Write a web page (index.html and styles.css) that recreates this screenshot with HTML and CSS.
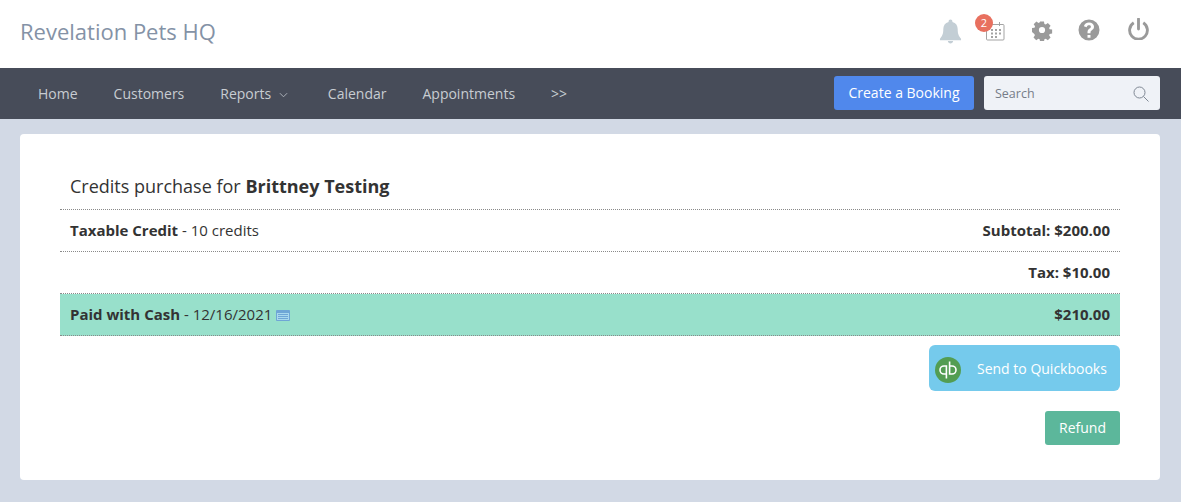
FILE: index.html
```html
<!DOCTYPE html>
<html lang="en">
<head>
<meta charset="utf-8">
<title>Revelation Pets HQ</title>
<link rel="stylesheet" href="styles.css">
</head>
<body>
<header class="topbar">
  <div class="brand">Revelation Pets HQ</div>
  <div class="top-icons">
    <svg class="ic ic-bell" viewBox="0 0 24 26" width="23" height="25"><path fill="#c3ced5" d="M12 0.500c-1.200 0-2 .9-2 2v.6C6.300 4 4.500 7 4.500 10.500c0 5.500-1.300 7.500-3.500 10v1.500h22v-1.500c-2.200-2.500-3.500-4.500-3.500-10 0-3.500-1.800-6.500-5.500-7.400v-.6c0-1.100-.8-2-2-2zM9.200 23c.2 1.500 1.400 2.500 2.800 2.500s2.600-1 2.800-2.500z"/></svg>
    <div class="cal-wrap">
      <svg class="ic-cal" viewBox="0 0 20 20" width="20" height="20"><g fill="none" stroke="#a3a3a3" stroke-width="1"><rect x="1.500" y="3.500" width="17.500" height="15.500" rx="1"/><path d="M6 1v4M14.500 1v4"/></g><g fill="#a3a3a3"><rect x="6" y="8" width="2" height="2"/><rect x="10" y="8" width="2" height="2"/><rect x="14" y="8" width="2" height="2"/><rect x="6" y="11.500" width="2" height="2"/><rect x="10" y="11.500" width="2" height="2"/><rect x="14" y="11.500" width="2" height="2"/><rect x="6" y="15" width="2" height="2"/><rect x="10" y="15" width="2" height="2"/></g></svg>
      <span class="badge">2</span>
    </div>
    <svg class="ic ic-gear" viewBox="0 0 24 24" width="22" height="22"><path fill="#9a9a9a" fill-rule="evenodd" d="M9.500 1h5l.6 3.200 1.700.7 2.700-1.800 3.500 3.500-1.900 2.700.7 1.700 3.200.5v5l-3.200.6-.7 1.700 1.900 2.700-3.500 3.500-2.700-1.900-1.700.7-.6 3.200h-5l-.5-3.200-1.700-.7-2.700 1.900-3.500-3.500 1.800-2.700-.7-1.700L-.8 14.500v-5l3.200-.5.700-1.700-1.800-2.700 3.500-3.500 2.700 1.800 1.700-.7zM12 8a4 4 0 1 0 0 8 4 4 0 0 0 0-8z" transform="translate(1.800 1.800) scale(.85)"/></svg>
    <svg class="ic ic-help" viewBox="0 0 22 22" width="22" height="22"><path fill="#9a9a9a" fill-rule="evenodd" d="M11 .5a10.500 10.500 0 1 0 0 21 10.500 10.500 0 0 0 0-21zM9.500 16h3v2.800h-3zM11 3.500c2.900 0 5 1.700 5 4.200 0 1.800-1 2.700-2.100 3.500-.9.700-1.400 1.100-1.400 2.300v.7h-3v-1c0-1.800.8-2.800 2-3.700.9-.6 1.400-1 1.400-1.800 0-.9-.8-1.400-1.900-1.400-1.200 0-2 .6-2.300 2l-2.800-1c.5-2.500 2.500-3.800 5.100-3.800z"/></svg>
    <svg class="ic ic-power" viewBox="0 0 22 23" width="21" height="22"><g fill="none" stroke="#9a9a9a" stroke-width="3"><path d="M11 1v10.500" stroke-linecap="round"/><path d="M6 5A9.300 9.300 0 1 0 16 5"/></g></svg>
  </div>
</header>
<nav class="navbar">
  <ul class="menu">
    <li>Home</li>
    <li>Customers</li>
    <li class="has-caret">Reports <svg class="caret" viewBox="0 0 10 6" width="9" height="6"><path d="M1 1l4 4 4-4" fill="none" stroke="#b5bac2" stroke-width="1"/></svg></li>
    <li>Calendar</li>
    <li>Appointments</li>
    <li>&gt;&gt;</li>
  </ul>
  <button class="btn-book">Create a Booking</button>
  <div class="search">
    <span class="search-label">Search</span>
    <svg viewBox="0 0 16 16" width="16" height="16"><circle cx="6.500" cy="6.500" r="5.500" fill="none" stroke="#7f8894" stroke-width="1"/><path d="M10.500 10.500L15.500 15.500" stroke="#7f8894" stroke-width="1"/></svg>
  </div>
</nav>
<main class="page">
  <section class="card">
    <h1 class="title">Credits purchase for <b>Brittney Testing</b></h1>
    <div class="row"><span><b>Taxable Credit</b> - 10 credits</span><b>Subtotal: $200.00</b></div>
    <div class="row"><span></span><b>Tax: $10.00</b></div>
    <div class="row row-paid"><span class="paid-left"><b>Paid with Cash</b> - 12/16/2021
      <svg class="note" viewBox="0 0 14 11" width="14" height="11"><rect x="0" y="0" width="14" height="11" rx="1" fill="#6fa6d6"/><rect x="1" y="3" width="12" height="7" fill="#a9d8ee"/><path d="M2 4.500h10M2 6.500h10M2 8.500h10" stroke="#6fa6d6" stroke-width="1"/></svg></span><b>$210.00</b></div>
    <div class="actions">
      <button class="btn-qb">
        <svg class="qb-logo" viewBox="0 0 26 26" width="26" height="26"><circle cx="13" cy="13" r="13" fill="#539d52"/><g fill="none" stroke="#fff" stroke-width="1.600"><path d="M11.400 17H9a4 4 0 0 1 0-8h2.400v12.500"/><path d="M14.600 9H17a4 4 0 0 1 0 8h-2.400V4.500"/></g></svg>
        <span>Send to Quickbooks</span>
      </button>
      <button class="btn-refund">Refund</button>
    </div>
  </section>
</main>
</body>
</html>
```
FILE: styles.css
```css
* { box-sizing: border-box; }
html, body { margin: 0; padding: 0; }
body {
  height: 502px;
  overflow: hidden;
  background: #d2d9e5;
  font-family: "Open Sans", "Noto Sans", sans-serif;
  font-size: 14px;
  color: #333;
}
.topbar {
  height: 68px;
  background: #fff;
  display: flex;
  align-items: center;
  justify-content: space-between;
  padding: 0 32px 9px 20px;
}
.brand { font-size: 22px; color: #8492a6; margin-top: 3px; }
.top-icons { display: flex; align-items: center; }
.ic-bell { margin-right: 23px; margin-top: 3px; }
.cal-wrap { position: relative; width: 20px; height: 20px; margin-right: 26px; margin-top: 2px; }
.ic-cal { display: block; }
.badge {
  position: absolute;
  left: -10px;
  top: -7px;
  width: 18px;
  height: 18px;
  border-radius: 50%;
  background: #e8705f;
  color: #fff;
  font-size: 11px;
  line-height: 18px;
  text-align: center;
}
.ic-gear { margin-right: 25px; }
.ic-help { margin-right: 28px; }
.ic-power { margin-bottom: 1px; }
.navbar {
  height: 51px;
  background: #474c59;
  display: flex;
  align-items: center;
  padding: 0 21px 1px 20px;
}
.menu {
  list-style: none;
  margin: 0;
  padding: 1px 0 0;
  display: flex;
  flex: 1;
  color: #c8ccd2;
  font-size: 14px;
}
.menu li { padding: 0 18px; white-space: nowrap; }
.menu .has-caret { padding-right: 22px; }
.caret { margin-left: 4px; vertical-align: 1px; }
button {
  border: 0;
  font-family: inherit;
  color: #fff;
  font-size: 14px;
  padding: 0;
}
.btn-book {
  width: 140px;
  height: 34px;
  border-radius: 3px;
  background: #5088ec;
  margin-right: 10px;
  padding-bottom: 2px;
}
.search {
  width: 176px;
  height: 34px;
  border-radius: 3px;
  background: #eff2f7;
  display: flex;
  align-items: center;
  justify-content: space-between;
  padding: 0 11px;
  font-size: 12.5px;
  color: #767d88;
}
.search svg { margin-top: 2px; }
.page { padding: 15px 21px 0 20px; }
.card {
  height: 346px;
  background: #fff;
  border-radius: 4px;
  padding: 32px 40px 0;
}
.title {
  margin: 0;
  height: 44px;
  padding: 9px 10px 0;
  font-size: 18px;
  line-height: 22px;
  font-weight: 400;
  border-bottom: 1px dotted #8a8a8a;
}
.title b { font-weight: 700; }
.row {
  height: 42px;
  padding: 0 10px 2px;
  display: flex;
  align-items: center;
  justify-content: space-between;
  border-bottom: 1px dotted #8a8a8a;
  font-size: 15px;
}
.row-paid { background: #98e0cb; }
.note { vertical-align: -1px; }
.actions {
  display: flex;
  flex-direction: column;
  align-items: flex-end;
}
.btn-qb {
  width: 191px;
  height: 46px;
  margin-top: 9px;
  border-radius: 6px;
  background: #75caec;
  display: flex;
  align-items: center;
  padding: 3px 6px 0;
  font-size: 14px;
}
.qb-logo { flex: none; margin-right: 16px; }
.btn-qb span { margin-top: -3px; }
.btn-refund {
  width: 75px;
  height: 34px;
  margin-top: 20px;
  border-radius: 3px;
  background: #5cb79b;
  font-size: 14px;
  padding-bottom: 2px;
}
```
